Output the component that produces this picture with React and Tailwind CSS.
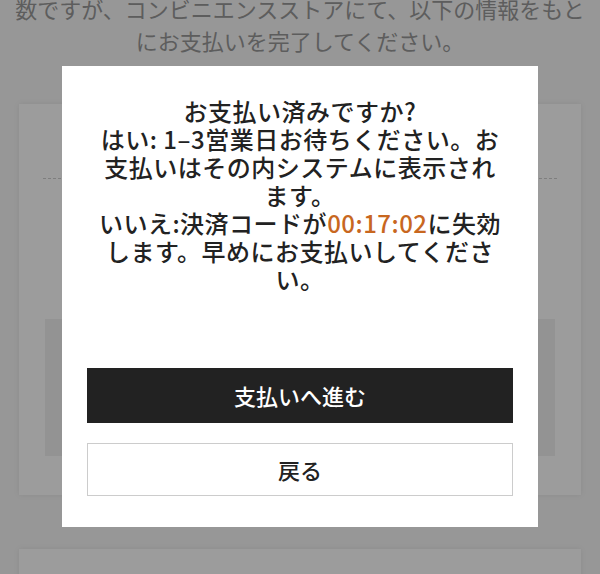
export default function App() {
  return (
    <div className="relative w-[600px] h-[574px] overflow-hidden bg-[#f7f7f7] font-['Noto_Sans_CJK_JP','Noto_Sans',sans-serif]">
      <div className="-mt-2 text-center text-[22px] leading-[32px] text-[#999] whitespace-nowrap">
        <p>数ですが、コンビニエンスストアにて、以下の情報をもと</p>
        <p>にお支払いを完了してください。</p>
      </div>
      <div className="mx-[19px] mt-[48px] h-[391px] bg-white px-[24px] shadow-[0_0_6px_rgba(0,0,0,0.08)]">
        <div className="h-[74px]" />
        <div className="border-t border-dashed border-[#cfcfcf]" />
        <div className="mx-[2px] mt-[140px] h-[137px] bg-[#f1f1f1]" />
      </div>
      <div className="mx-[19px] mt-[54px] h-[100px] bg-white shadow-[0_0_6px_rgba(0,0,0,0.08)]" />

      <div className="absolute inset-0 flex items-start justify-center bg-black/[0.39] pt-[66px]">
        <div className="w-[476px] bg-white px-[25px] pt-[31px] pb-[31px]">
          <div className="text-center text-[24px] leading-[28px] font-medium tracking-[0.5px] text-[#222] whitespace-nowrap">
            <p>お支払い済みですか?</p>
            <p>はい: 1–3営業日お待ちください。お</p>
            <p>支払いはその内システムに表示され</p>
            <p>ます。</p>
            <p>
              いいえ:決済コードが<span className="text-[#c8671f]">00:17:02</span>に失効
            </p>
            <p>します。早めにお支払いしてくださ</p>
            <p>い。</p>
          </div>
          <button className="mt-[75px] flex h-[55px] w-full items-center justify-center bg-[#222] text-[22px] font-medium text-white">
            支払いへ進む
          </button>
          <button className="mt-[20px] flex h-[53px] w-full items-center justify-center border border-[#cccccc] bg-white text-[22px] font-medium text-[#222]">
            戻る
          </button>
        </div>
      </div>
    </div>
  );
}
